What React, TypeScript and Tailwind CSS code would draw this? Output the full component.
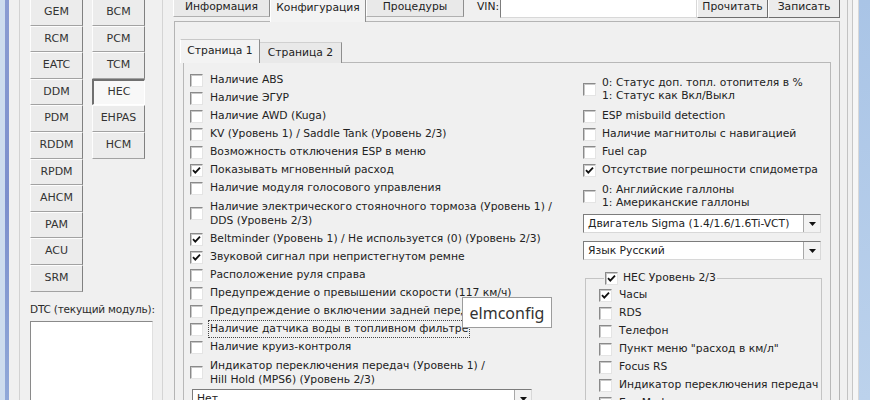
import React from "react";

type Item = { label: string; checked?: boolean; two?: boolean; focus?: boolean; h?: string };

const leftRows: Item[] = [
  { label: "Наличие ABS" },
  { label: "Наличие ЭГУР" },
  { label: "Наличие AWD (Kuga)" },
  { label: "KV (Уровень 1) / Saddle Tank (Уровень 2/3)" },
  { label: "Возможность отключения ESP в меню" },
  { label: "Показывать мгновенный расход", checked: true },
  { label: "Наличие модуля голосового управления" },
  { label: "Наличие электрического стояночного тормоза (Уровень 1) /\nDDS (Уровень 2/3)", two: true },
  { label: "Beltminder (Уровень 1) / Не используется (0) (Уровень 2/3)", checked: true },
  { label: "Звуковой сигнал при непристегнутом ремне", checked: true },
  { label: "Расположение руля справа" },
  { label: "Предупреждение о превышении скорости (117 км/ч)" },
  { label: "Предупреждение о включении задней передачи" },
  { label: "Наличие датчика воды в топливном фильтре", focus: true },
  { label: "Наличие круиз-контроля" },
  { label: "Индикатор переключения передач (Уровень 1) /\nHill Hold (MPS6) (Уровень 2/3)", two: true },
];

const hecRows: Item[] = [
  { label: "Часы", checked: true },
  { label: "RDS" },
  { label: "Телефон" },
  { label: "Пункт меню \"расход в км/л\"" },
  { label: "Focus RS" },
  { label: "Индикатор переключения передач" },
  { label: "Eco Mode" },
];

const col1 = ["GEM", "RCM", "EATC", "DDM", "PDM", "RDDM", "RPDM", "AHCM", "PAM", "ACU", "SRM"];
const col2 = ["BCM", "PCM", "TCM", "HEC", "EHPAS", "HCM"];

function Check({ checked }: { checked?: boolean }) {
  return (
    <span className="relative inline-block w-[13px] h-[13px] shrink-0 bg-white border border-t-[#8a8a8a] border-l-[#8a8a8a] border-r-[#e4e4e4] border-b-[#e4e4e4] shadow-[inset_1px_1px_0_#c8c8c8]">
      {checked && (
        <svg viewBox="0 0 11 11" className="absolute inset-0 w-[11px] h-[11px]">
          <path d="M2 5.2 L4.3 7.6 L9 2.6" fill="none" stroke="#111" strokeWidth="1.8" />
        </svg>
      )}
    </span>
  );
}

function Row({ item, gap = "ml-[7px]" }: { item: Item; gap?: string }) {
  const h = item.h ?? (item.two ? "h-[33px]" : "h-[18px]");
  return (
    <div className={`flex items-center ${h}`}>
      <Check checked={item.checked} />
      <span
        className={`${gap} leading-[13.5px] whitespace-pre ${
          item.focus ? "outline-1 outline-dotted outline-[#444] outline-offset-1" : ""
        }`}
      >
        {item.label}
      </span>
    </div>
  );
}

function Combo({ text, className }: { text: string; className: string }) {
  return (
    <div className={`h-[19px] shrink-0 flex bg-white border border-t-[#7c7c7c] border-l-[#7c7c7c] border-r-[#d8d8d8] border-b-[#d8d8d8] ${className}`}>
      <span className="flex-1 pl-[4px] leading-[17px] truncate">{text}</span>
      <span className="w-[17px] flex items-center justify-center bg-[#f2f2f2] border-l border-[#a8a8a8]">
        <svg viewBox="0 0 7 4" className="w-[7px] h-[4px]">
          <path d="M0 0 H7 L3.5 4 Z" fill="#111" />
        </svg>
      </span>
    </div>
  );
}

function ModBtn({ label, active }: { label: string; active?: boolean }) {
  if (active)
    return (
      <div className="h-[26.6px] flex items-center justify-center bg-[#f8f8f8] border-t-2 border-l-2 border-t-[#707070] border-l-[#707070] border-b border-r border-b-white border-r-white">
        {label}
      </div>
    );
  return (
    <div className="h-[26.6px] flex items-center justify-center bg-[#ececec] border border-t-[#fdfdfd] border-l-[#fdfdfd] border-b-[#a2a2a2] border-r-[#808080]">
      {label}
    </div>
  );
}

export default function App() {
  return (
    <div className="relative w-[870px] h-[400px] overflow-hidden flex bg-[#f0f0f0] text-[10.75px] text-[#222] whitespace-nowrap font-['DejaVu_Sans',sans-serif]">
      {/* window frame left */}
      <div className="w-[5px] shrink-0 bg-[#cddcee]" />
      <div className="w-[4px] shrink-0 bg-gradient-to-b from-[#8a9cd2] via-[#7c8fcc] to-[#90a8d8]" />
      <div className="w-[11px] shrink-0 border-r border-[#d2d2d2]" />

      {/* modules */}
      <div className="w-[143px] shrink-0 border-r border-[#d4d4d4] pl-[10px] text-[#333] text-[11px]">
        <div className="flex gap-[9px] -mt-[1px]">
          <div className="w-[53px] flex flex-col">
            {col1.map((m) => (
              <ModBtn key={m} label={m} />
            ))}
          </div>
          <div className="w-[53px] flex flex-col">
            {col2.map((m) => (
              <ModBtn key={m} label={m} active={m === "HEC"} />
            ))}
          </div>
        </div>
        <div className="mt-[10px] leading-[14px] text-[#2a2a2a] text-[10.5px] tracking-[-0.2px]">DTC (текущий модуль):</div>
        <div className="mt-[5px] w-[123px] h-[100px] bg-white border border-t-[#8a8a8a] border-l-[#8a8a8a] border-r-[#e0e0e0] border-b-[#e0e0e0]" />
      </div>

      <div className="w-[11px] shrink-0" />

      {/* main tab control */}
      <div className="w-[666px] shrink-0 flex flex-col">
        <div className="-mt-[5px] h-[27px] flex items-start">
          <div className="-ml-[1px] w-[97px] h-[22px] pt-[3px] flex items-center justify-center bg-[#e9e9e9] border border-t-white border-l-white border-r-[#8e8e8e] border-b-[#b0b0b0]">
            Информация
          </div>
          <div className="relative z-10 w-[96px] h-[27px] pt-[5px] flex items-start justify-center bg-[#f3f3f3] border-l border-r border-l-white border-r-[#8e8e8e]">
            Конфигурация
          </div>
          <div className="w-[98px] h-[22px] pt-[3px] flex items-center justify-center bg-[#e9e9e9] border border-t-white border-l-white border-r-[#8e8e8e] border-b-[#b0b0b0]">
            Процедуры
          </div>
          <div className="ml-[13px] h-[22px] pt-[3px] flex items-center">VIN:</div>
          <div className="ml-[1px] flex-1 h-[23px] bg-white border border-t-[#7c7c7c] border-l-[#7c7c7c] border-r-[#d8d8d8] border-b-[#d8d8d8]" />
          <div className="w-[71px] h-[23px] pt-[1px] flex items-center justify-center bg-[#ececec] border border-t-white border-l-white border-r-[#6e6e6e] border-b-[#6e6e6e]">
            Прочитать
          </div>
          <div className="w-[72px] h-[23px] pt-[1px] flex items-center justify-center bg-[#ececec] border border-t-white border-l-white border-r-[#6e6e6e] border-b-[#6e6e6e]">
            Записать
          </div>
        </div>

        <div className="-mt-[1px] flex-1 border border-[#b4b4b4] pt-[17px]">
          <div className="ml-[5px] h-[24px] flex items-end">
            <div className="relative z-10 w-[80px] h-[24px] flex items-center justify-center bg-[#f3f3f3] border-t border-l border-r border-t-[#c8c8c8] border-l-white border-r-[#8e8e8e]">
              Страница 1
            </div>
            <div className="w-[82px] h-[21px] flex items-center justify-center bg-[#e9e9e9] border-t border-r border-t-[#d0d0d0] border-r-[#8e8e8e]">
              Страница 2
            </div>
          </div>
          <div className="-mt-[1px] ml-[8px] w-[648px] h-[400px] border border-[#b8b8b8] flex">
            <div className="w-[399px] shrink-0 pl-[6px] pt-[8px] flex flex-col">
              {leftRows.map((r) => (
                <Row key={r.label} item={r} />
              ))}
              <Combo text="Нет" className="ml-[2px] w-[340px]" />
            </div>
            <div className="w-[238px] shrink-0 pt-[8px] flex flex-col">
              <Row item={{ label: "0: Статус доп. топл. отопителя в %\n1: Статус как Вкл/Выкл", h: "h-[36px]" }} gap="ml-[6px]" />
              <Row item={{ label: "ESP misbuild detection" }} gap="ml-[6px]" />
              <Row item={{ label: "Наличие магнитолы с навигацией" }} gap="ml-[6px]" />
              <Row item={{ label: "Fuel cap" }} gap="ml-[6px]" />
              <Row item={{ label: "Отсутствие погрешности спидометра", checked: true }} gap="ml-[6px]" />
              <Row item={{ label: "0: Английские галлоны\n1: Американские галлоны", h: "h-[34px]" }} gap="ml-[6px]" />
              <Combo text="Двигатель Sigma (1.4/1.6/1.6Ti-VCT)" className="mt-[1px] w-[238px]" />
              <Combo text="Язык Русский" className="mt-[8px] w-[238px]" />
              <fieldset className="mt-[11px] ml-[2px] w-[237px] shrink-0 border border-[#c4c4c4] pl-[13px] pb-[10px]">
                <legend className="ml-[5px] px-[1px]">
                  <span className="flex items-center h-[14px]">
                    <Check checked />
                    <span className="ml-[5px]">HEC Уровень 2/3</span>
                  </span>
                </legend>
                <div className="mt-[1px]">
                  {hecRows.map((r) => (
                    <Row key={r.label} item={r} />
                  ))}
                </div>
              </fieldset>
            </div>
          </div>
        </div>
      </div>

      {/* window frame right */}
      <div className="w-[7px] shrink-0" />
      <div className="w-[1px] shrink-0 bg-[#c2c2c2]" />
      <div className="w-[4px] shrink-0" />
      <div className="w-[1px] shrink-0 bg-[#c6c6c6]" />
      <div className="w-[5px] shrink-0 bg-[#f6f6f6]" />
      <div className="w-[1px] shrink-0 bg-[#d8d8d8]" />
      <div className="flex-1 bg-gradient-to-b from-[#a9c4e6] to-[#bcd2ec]" />

      {/* tooltip */}
      <div className="absolute left-[462px] top-[297px] w-[90px] h-[31px] flex items-center justify-center bg-white border border-[#9c9c9c] text-[16px] text-[#333] font-['Noto_Sans',sans-serif]">
        elmconfig
      </div>
    </div>
  );
}
